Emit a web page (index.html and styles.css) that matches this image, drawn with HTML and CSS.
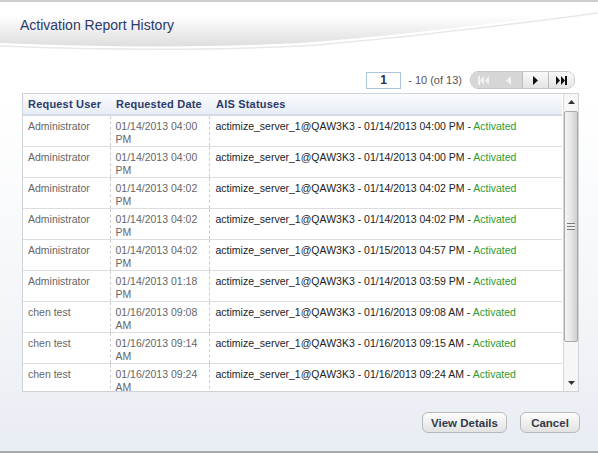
FILE: index.html
```html
<!DOCTYPE html>
<html>
<head>
<meta charset="utf-8">
<title>Activation Report History</title>
<link rel="stylesheet" href="styles.css">
</head>
<body>
<div class="dialog">
  <div class="header">
    <svg class="swoosh" width="598" height="60" viewBox="0 0 598 60">
      <defs>
        <linearGradient id="sw" x1="0" y1="0" x2="0" y2="1" gradientUnits="objectBoundingBox">
          <stop offset="0" stop-color="#ffffff"/>
          <stop offset="0.3" stop-color="#ffffff"/>
          <stop offset="1" stop-color="#dedede"/>
        </linearGradient>
      </defs>
      <path d="M0 0 H598 V8 C520 18 400 34 300 41 C200 46 100 45 0 41 Z" fill="url(#sw)"/>
      <path d="M0 44 C100 48 200 49 300 44 C400 37 520 21 598 11" fill="none" stroke="#e8e8e8" stroke-width="1.5"/>
    </svg>
    <h1 class="title">Activation Report History</h1>
  </div>

  <div class="pager">
    <div class="page-input">1</div>
    <span class="page-info">- 10 (of 13)</span>
    <div class="pager-btns">
      <span class="pbtn disabled">
        <svg width="11" height="9" viewBox="0 0 11 9"><rect x="0" y="0" width="2" height="9" fill="currentColor"/><path d="M6 0 L2 4.5 L6 9 Z M11 0 L7 4.5 L11 9 Z" fill="currentColor"/></svg>
      </span>
      <span class="pbtn disabled">
        <svg width="5" height="9" viewBox="0 0 5 9"><path d="M5 0 L0 4.5 L5 9 Z" fill="currentColor"/></svg>
      </span>
      <span class="pbtn enabled">
        <svg width="5" height="9" viewBox="0 0 5 9"><path d="M0 0 L5 4.5 L0 9 Z" fill="currentColor"/></svg>
      </span>
      <span class="pbtn enabled">
        <svg width="11" height="9" viewBox="0 0 11 9"><path d="M0 0 L4 4.5 L0 9 Z M5 0 L9 4.5 L5 9 Z" fill="currentColor"/><rect x="9" y="0" width="2" height="9" fill="currentColor"/></svg>
      </span>
    </div>
  </div>

  <div class="grid">
    <div class="grid-main">
      <table class="report">
        <colgroup><col class="w1"><col class="w2"><col class="w3"></colgroup>
        <thead>
          <tr><th>Request User</th><th class="h2">Requested Date</th><th class="h3">AIS Statuses</th></tr>
        </thead>
        <tbody>
          <tr><td class="c1">Administrator</td><td class="c2">01/14/2013 04:00 PM</td><td class="c3">actimize_server_1@QAW3K3 - 01/14/2013 04:00 PM - <span class="ok">Activated</span></td></tr>
          <tr><td class="c1">Administrator</td><td class="c2">01/14/2013 04:00 PM</td><td class="c3">actimize_server_1@QAW3K3 - 01/14/2013 04:00 PM - <span class="ok">Activated</span></td></tr>
          <tr><td class="c1">Administrator</td><td class="c2">01/14/2013 04:02 PM</td><td class="c3">actimize_server_1@QAW3K3 - 01/14/2013 04:02 PM - <span class="ok">Activated</span></td></tr>
          <tr><td class="c1">Administrator</td><td class="c2">01/14/2013 04:02 PM</td><td class="c3">actimize_server_1@QAW3K3 - 01/14/2013 04:02 PM - <span class="ok">Activated</span></td></tr>
          <tr><td class="c1">Administrator</td><td class="c2">01/14/2013 04:02 PM</td><td class="c3">actimize_server_1@QAW3K3 - 01/15/2013 04:57 PM - <span class="ok">Activated</span></td></tr>
          <tr><td class="c1">Administrator</td><td class="c2">01/14/2013 01:18 PM</td><td class="c3">actimize_server_1@QAW3K3 - 01/14/2013 03:59 PM - <span class="ok">Activated</span></td></tr>
          <tr><td class="c1">chen test</td><td class="c2">01/16/2013 09:08 AM</td><td class="c3">actimize_server_1@QAW3K3 - 01/16/2013 09:08 AM - <span class="ok">Activated</span></td></tr>
          <tr><td class="c1">chen test</td><td class="c2">01/16/2013 09:14 AM</td><td class="c3">actimize_server_1@QAW3K3 - 01/16/2013 09:15 AM - <span class="ok">Activated</span></td></tr>
          <tr><td class="c1">chen test</td><td class="c2">01/16/2013 09:24 AM</td><td class="c3">actimize_server_1@QAW3K3 - 01/16/2013 09:24 AM - <span class="ok">Activated</span></td></tr>
        </tbody>
      </table>
    </div>
    <div class="scrollbar">
      <div class="sb-btn">
        <svg width="7" height="4" viewBox="0 0 7 4"><path d="M3.5 0 L7 4 L0 4 Z" fill="#333"/></svg>
      </div>
      <div class="sb-track">
        <div class="sb-thumb"><span class="grip"></span></div>
      </div>
      <div class="sb-btn">
        <svg width="7" height="4" viewBox="0 0 7 4"><path d="M0 0 L7 0 L3.5 4 Z" fill="#333"/></svg>
      </div>
    </div>
  </div>

  <div class="actions">
    <button class="btn btn-view">View Details</button>
    <button class="btn btn-cancel">Cancel</button>
  </div>
</div>
</body>
</html>
```

FILE: styles.css
```css
html, body {
  margin: 0;
  padding: 0;
}

body {
  font-family: "Liberation Sans", Arial, sans-serif;
  background: #ffffff;
}

.dialog {
  width: 598px;
  height: 453px;
  box-sizing: border-box;
  border-top: 2px solid #cdcdcd;
  border-bottom: 2px solid #a9a9a9;
  background: linear-gradient(to bottom, #ffffff 0%, #ffffff 22%, #f3f5f8 70%, #e8ecf3 100%);
  display: flex;
  flex-direction: column;
  overflow: hidden;
}

.header {
  position: relative;
  height: 69px;
  flex: none;
}

.swoosh {
  position: absolute;
  top: 0;
  left: 0;
}

.title {
  position: relative;
  margin: 0;
  padding: 15px 0 0 20px;
  font-size: 14px;
  line-height: 16px;
  font-weight: normal;
  color: #2b3a6b;
}

.pager {
  display: flex;
  align-items: center;
  justify-content: flex-end;
  height: 18px;
  padding-right: 23px;
  flex: none;
}

.page-input {
  width: 35px;
  height: 17px;
  box-sizing: border-box;
  border: 1px solid #aec3dc;
  background: #ffffff;
  text-align: center;
  font-weight: bold;
  font-size: 12px;
  line-height: 15px;
  color: #1d2b5a;
}

.page-info {
  margin: 0 8px 0 7px;
  font-size: 11px;
  color: #555555;
  white-space: nowrap;
}

.pager-btns {
  display: flex;
  width: 105px;
  height: 18px;
  box-sizing: border-box;
  border: 1px solid #c6c6c6;
  border-radius: 8px;
  overflow: hidden;
}

.pbtn {
  flex: 1;
  display: flex;
  align-items: center;
  justify-content: center;
}

.pbtn.disabled {
  background: #d6d6d6;
  color: #f2f2f2;
}

.pbtn.enabled {
  background: linear-gradient(to bottom, #f9f9f9, #e4e4e4);
  color: #111111;
  border-left: 1px solid #bdbdbd;
}

.grid {
  margin: 4px 0 0 22px;
  width: 557px;
  height: 299px;
  box-sizing: border-box;
  border: 1px solid #cfd4da;
  background: #ffffff;
  display: flex;
  flex: none;
}

.grid-main {
  flex: 1;
  overflow: hidden;
}

.report {
  border-collapse: collapse;
  table-layout: fixed;
  width: 539px;
}

.w1 { width: 87px; }
.w2 { width: 99px; }
.w3 { width: 353px; }

.report th {
  height: 20px;
  padding: 0 0 0 5px;
  text-align: left;
  font-size: 11px;
  font-weight: bold;
  letter-spacing: 0.2px;
  color: #2b3a6b;
  background: linear-gradient(to bottom, #fafbfd, #e8edf5);
  border-bottom: 2px solid #d3dce8;
  white-space: nowrap;
}

.report th.h2 {
  padding-left: 6px;
}

.report th.h3 {
  padding-left: 7px;
}

.report td {
  padding: 4px 4px 0 5px;
  vertical-align: top;
  font-size: 10.5px;
  line-height: 13px;
  color: #666666;
  border-bottom: 1px solid #dddddd;
}

.report td.c2,
.report td.c3 {
  border-left: 1px dashed #cccccc;
}

.report td.c1,
.report td.c3 {
  white-space: nowrap;
}

.report td.c3 {
  padding-left: 6px;
  color: #222222;
}

.ok {
  color: #2e9a2e;
}

.scrollbar {
  width: 15px;
  box-sizing: border-box;
  border-left: 1px solid #d8d8d8;
  background: #f6f6f6;
  display: flex;
  flex-direction: column;
}

.sb-btn {
  height: 16px;
  display: flex;
  align-items: center;
  justify-content: center;
  flex: none;
}

.sb-track {
  flex: 1;
  padding-top: 1px;
}

.sb-thumb {
  height: 231px;
  box-sizing: border-box;
  border: 1px solid #aaaaaa;
  border-radius: 2px;
  background: linear-gradient(to right, #f4f4f4, #e7e7e7 50%, #cfcfcf);
  display: flex;
  align-items: center;
  justify-content: center;
}

.grip {
  width: 8px;
  height: 7px;
  background: repeating-linear-gradient(to bottom, #7a7a7a 0, #7a7a7a 1px, #f0f0f0 1px, #f0f0f0 3px);
}

.actions {
  display: flex;
  justify-content: flex-end;
  gap: 13px;
  margin-top: 20px;
  padding-right: 18px;
  flex: none;
}

.btn {
  height: 21px;
  padding: 0;
  border: 1px solid #b9b9b9;
  border-radius: 6px;
  background: linear-gradient(to bottom, #fdfdfd, #e2e2e2);
  font-family: "Liberation Sans", Arial, sans-serif;
  font-weight: bold;
  font-size: 11.5px;
  color: #333a48;
}

.btn-view { width: 85px; }
.btn-cancel { width: 60px; }
```
